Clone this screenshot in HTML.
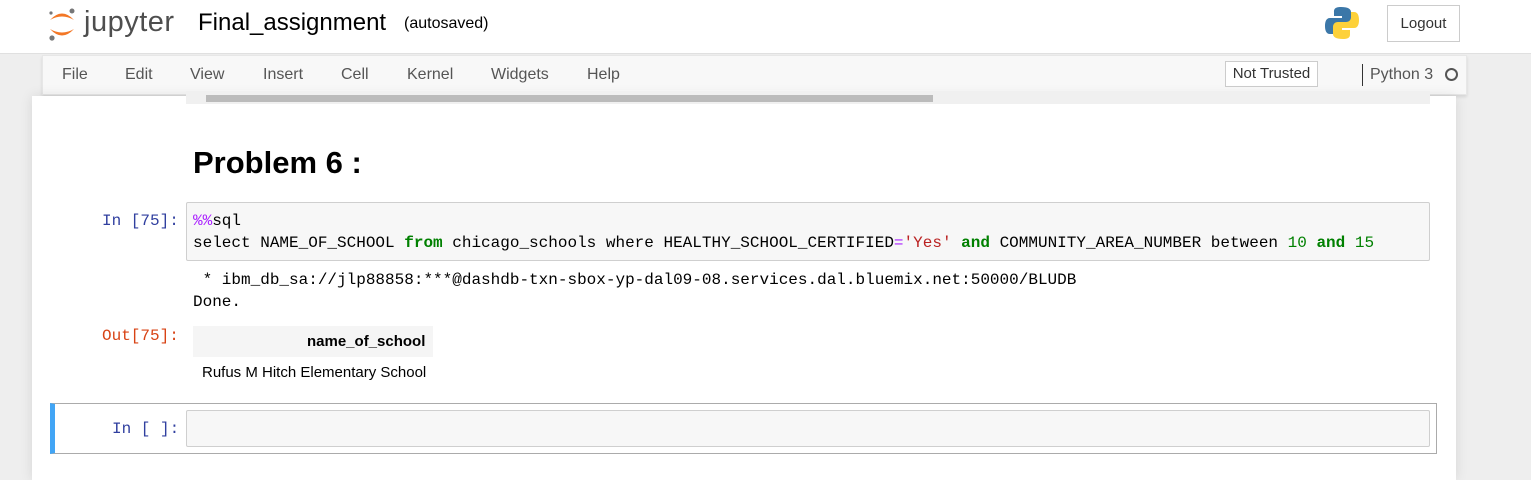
<!DOCTYPE html>
<html><head><meta charset="utf-8"><style>
*{box-sizing:border-box;margin:0;padding:0}
body{width:1531px;height:480px;overflow:hidden;background:#eee;font-family:"Liberation Sans",Arial,sans-serif;position:relative}
.abs{position:absolute}
.mono{font-family:"Liberation Mono",monospace;font-size:16px;white-space:pre}
</style></head><body>
<div class="abs" style="left:0;top:0;width:1531px;height:54px;background:#fff;border-bottom:1px solid #e0e0e0"></div>
<svg class="abs" style="left:46px;top:6px" width="32" height="36" viewBox="0 0 32 36">
<path d="M4 14 Q16 1 28 14 Q16 7 4 14Z" fill="#f37726"/>
<path d="M4 23 Q16 36 28 23 Q16 30 4 23Z" fill="#f37726"/>
<circle cx="26" cy="5" r="2.5" fill="#767677"/><circle cx="5" cy="7" r="1.6" fill="#767677"/><circle cx="6" cy="32" r="2.6" fill="#767677"/>
</svg>
<div class="abs" style="left:84px;top:6px;font-size:29px;color:#4e4e4e;letter-spacing:.5px">jupyter</div>
<div class="abs" style="left:198px;top:9px;font-size:24px;color:#000">Final_assignment</div>
<div class="abs" style="left:404px;top:15px;font-size:16px;color:#000">(autosaved)</div>
<svg class="abs" style="left:1324px;top:5px" width="36" height="36" viewBox="0 0 36 36">
<path d="M17 2c-7 0-7 3-7 5v4h8v2H6c-4 0-5 4-5 8s1 8 5 8h3v-5c0-3 2-5 5-5h8c3 0 5-2 5-5V7c0-3-3-5-10-5z" fill="#3b77a8"/>
<path d="M19 34c7 0 7-3 7-5v-4h-8v-2h12c4 0 5-4 5-8s-1-8-5-8h-3v5c0 3-2 5-5 5h-8c-3 0-5 2-5 5v7c0 3 3 5 10 5z" fill="#fdd13a"/>
</svg>
<div class="abs" style="left:1387px;top:5px;width:73px;height:37px;border:1px solid #ccc;font-size:15px;color:#333;text-align:center;line-height:36px">Logout</div>
<div class="abs" style="left:42px;top:55px;width:1425px;height:40px;background:#f8f8f8;border:1px solid #e7e7e7;box-shadow:0 2px 3px rgba(0,0,0,.1)"></div>
<div class="abs" style="top:66px;font-size:16px;color:#555">
<span class="abs" style="left:62px">File</span><span class="abs" style="left:125px">Edit</span><span class="abs" style="left:190px">View</span><span class="abs" style="left:263px">Insert</span><span class="abs" style="left:341px">Cell</span><span class="abs" style="left:407px">Kernel</span><span class="abs" style="left:491px">Widgets</span><span class="abs" style="left:587px">Help</span></div>
<div class="abs" style="left:1225px;top:61px;width:93px;height:26px;border:1px solid #ccc;background:#fff;font-size:15px;color:#333;text-align:center;line-height:24px">Not Trusted</div>
<div class="abs" style="left:1362px;top:64px;width:1px;height:22px;background:#333"></div>
<div class="abs" style="left:1370px;top:66px;font-size:16px;color:#555">Python 3</div>
<div class="abs" style="left:1445px;top:68px;width:13px;height:13px;border:2px solid #555;border-radius:50%"></div>
<div class="abs" style="left:32px;top:96px;width:1424px;height:384px;background:#fff;box-shadow:0 0 12px rgba(0,0,0,.1)"></div>
<div class="abs" style="left:186px;top:91px;width:1244px;height:13px;background:#f0f0f0"></div>
<div class="abs" style="left:206px;top:95px;width:727px;height:7px;background:#bbb"></div>
<div class="abs" style="left:193px;top:145px;font-size:31px;font-weight:bold;color:#000">Problem 6 :</div>
<div class="abs mono" style="left:102px;top:212px;color:#303f9f">In [75]:</div>
<div class="abs" style="left:186px;top:202px;width:1244px;height:59px;background:#f7f7f7;border:1px solid #cfcfcf;border-radius:2px"></div>
<div class="abs mono" style="left:193px;top:210px;line-height:22px;color:#000"><span style="color:#aa22ff">%%</span>sql
select NAME_OF_SCHOOL <b style="color:#008000">from</b> chicago_schools where HEALTHY_SCHOOL_CERTIFIED<span style="color:#aa22ff">=</span><span style="color:#ba2121">'Yes'</span> <b style="color:#008000">and</b> COMMUNITY_AREA_NUMBER between <span style="color:#008000">10</span> <b style="color:#008000">and</b> <span style="color:#008000">15</span></div>
<div class="abs mono" style="left:193px;top:269px;line-height:22px;color:#000"> * ibm_db_sa://jlp88858:***@dashdb-txn-sbox-yp-dal09-08.services.dal.bluemix.net:50000/BLUDB
Done.</div>
<div class="abs mono" style="left:102px;top:327px;color:#d84315">Out[75]:</div>
<div class="abs" style="left:193px;top:326px;width:240px;height:31px;background:#f5f5f5"></div>
<div class="abs" style="left:307px;top:333px;font-size:15px;font-weight:bold;color:#000">name_of_school</div>
<div class="abs" style="left:202px;top:364px;font-size:15px;color:#000">Rufus M Hitch Elementary School</div>
<div class="abs" style="left:50px;top:403px;width:1387px;height:51px;border:1px solid #ababab;border-left:5px solid #42a5f5"></div>
<div class="abs mono" style="left:112px;top:420px;color:#303f9f">In [ ]:</div>
<div class="abs" style="left:186px;top:410px;width:1244px;height:37px;background:#f7f7f7;border:1px solid #cfcfcf;border-radius:2px"></div>
</body></html>
